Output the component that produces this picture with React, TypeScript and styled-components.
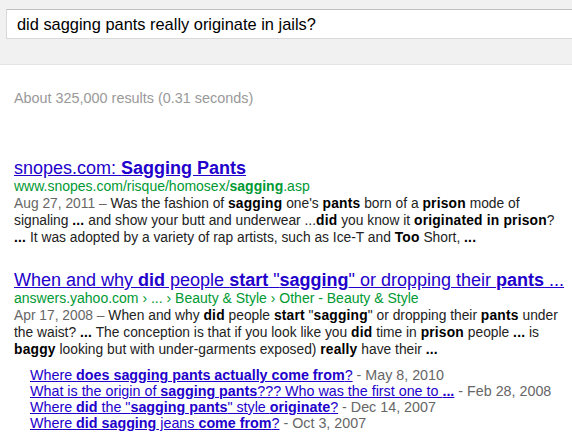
import React from "react";
import styled, { createGlobalStyle } from "styled-components";

const Global = createGlobalStyle`
  html, body { margin: 0; padding: 0; background: #fff; overflow: hidden; }
  body { font-family: Arial, "Liberation Sans", sans-serif; }
`;

const Page = styled.div`
  width: 572px;
  height: 432px;
  overflow: hidden;
`;

const Header = styled.header`
  height: 65px;
  background: #f1f1f1;
  border-bottom: 1px solid #e5e5e5;
  padding: 9px 0 0 6px;
  box-sizing: border-box;
`;

const SearchBox = styled.div`
  width: 600px;
  height: 30px;
  box-sizing: border-box;
  background: #fff;
  border: 1px solid #d9d9d9;
  border-top-color: #c0c0c0;
  padding: 0 0 0 10px;
  display: flex;
  align-items: center;
  font-size: 16.4px;
  color: #000;
  white-space: nowrap;
`;

const Stats = styled.div`
  margin: 25px 0 0 14px;
  font-size: 14.4px;
  line-height: 16px;
  color: #999;
`;

const Results = styled.ol`
  list-style: none;
  margin: 53px 0 0 0;
  padding: 0 0 0 14px;
  white-space: nowrap;
`;

const Result = styled.li`
  & + & { margin-top: 25px; }
`;

const Title = styled.a`
  display: inline-block;
  font-size: 18px;
  line-height: 19px;
  color: #2200cc;
  text-decoration: underline;
  b { font-weight: bold; }
`;

const Cite = styled.div`
  font-size: 14px;
  line-height: 17px;
  color: #009933;
  b { font-weight: bold; }
`;

const Snippet = styled.div`
  font-size: 13.8px;
  line-height: 17px;
  color: #222;
  b { font-weight: bold; color: #000; letter-spacing: 0.2px; }
`;

const DateText = styled.span`
  color: #666;
`;

const Sitelinks = styled.ul`
  list-style: none;
  margin: 9px 0 0 0;
  padding: 0 0 0 16px;
`;

const Sitelink = styled.li`
  font-size: 14.3px;
  line-height: 16px;
  color: #666;
  a { color: #2200cc; text-decoration: underline; }
`;

const sitelinks: { content: React.ReactNode; date: string }[] = [
  {
    content: (
      <>
        Where <b>does sagging pants actually come from</b>?
      </>
    ),
    date: "May 8, 2010",
  },
  {
    content: (
      <>
        What is the origin of <b>sagging pants</b>??? Who was the first one to <b>...</b>
      </>
    ),
    date: "Feb 28, 2008",
  },
  {
    content: (
      <>
        Where <b>did</b> the "<b>sagging pants</b>" style <b>originate</b>?
      </>
    ),
    date: "Dec 14, 2007",
  },
  {
    content: (
      <>
        Where <b>did sagging</b> jeans <b>come from</b>?
      </>
    ),
    date: "Oct 3, 2007",
  },
];

export default function App() {
  return (
    <Page>
      <Global />
      <Header>
        <SearchBox>did sagging pants really originate in jails?</SearchBox>
      </Header>
      <Stats>About 325,000 results (0.31 seconds)</Stats>
      <Results>
        <Result>
          <Title href="#">
            snopes.com: <b>Sagging Pants</b>
          </Title>
          <Cite>
            www.snopes.com/risque/homosex/<b>sagging</b>.asp
          </Cite>
          <Snippet>
            <DateText>Aug 27, 2011 – </DateText>Was the fashion of <b>sagging</b> one's <b>pants</b> born of a <b>prison</b> mode of
            <br />
            signaling <b>...</b> and show your butt and underwear ...<b>did</b> you know it <b>originated in prison</b>?
            <br />
            <b>...</b> It was adopted by a variety of rap artists, such as Ice-T and <b>Too</b> Short, <b>...</b>
          </Snippet>
        </Result>
        <Result>
          <Title href="#">
            When and why <b>did</b> people <b>start</b> "<b>sagging</b>" or dropping their <b>pants</b> ...
          </Title>
          <Cite>answers.yahoo.com › ... › Beauty &amp; Style › Other - Beauty &amp; Style</Cite>
          <Snippet>
            <DateText>Apr 17, 2008 – </DateText>When and why <b>did</b> people <b>start</b> "<b>sagging</b>" or dropping their <b>pants</b> under
            <br />
            the waist? <b>...</b> The conception is that if you look like you <b>did</b> time in <b>prison</b> people <b>...</b> is
            <br />
            <b>baggy</b> looking but with under-garments exposed) <b>really</b> have their <b>...</b>
          </Snippet>
          <Sitelinks>
            {sitelinks.map((s, i) => (
              <Sitelink key={i}>
                <a href="#">{s.content}</a> - {s.date}
              </Sitelink>
            ))}
          </Sitelinks>
        </Result>
      </Results>
    </Page>
  );
}
